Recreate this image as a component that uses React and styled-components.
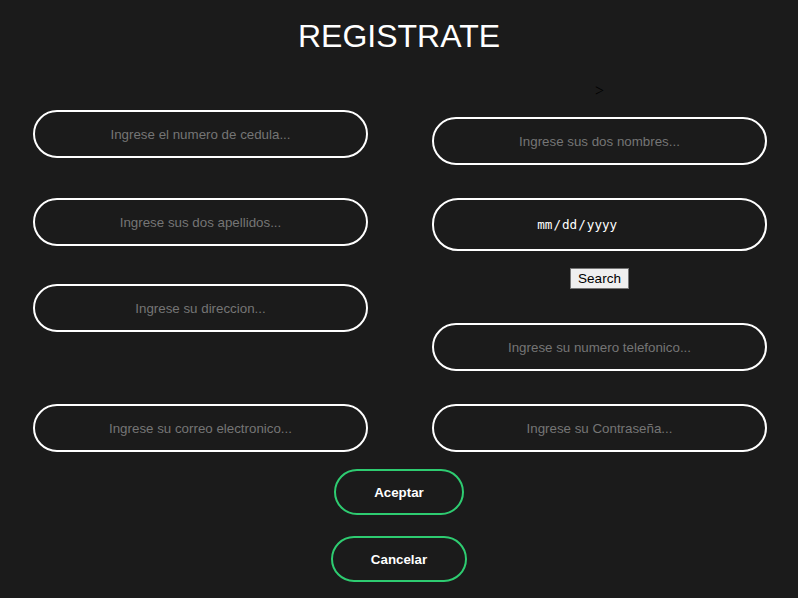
import React from "react";
import styled, { createGlobalStyle } from "styled-components";

const Global = createGlobalStyle`
  html, body { margin: 0; padding: 0; background: #1b1b1b; }
  body { font-family: "Liberation Sans", Arial, sans-serif; }
  * { box-sizing: border-box; }
`;

const Page = styled.div`
  width: 798px;
  min-height: 598px;
  background: #1b1b1b;
  display: flex;
  flex-direction: column;
`;

const Title = styled.h1`
  margin: 18px 0 0;
  font-family: "Liberation Sans", Arial, sans-serif;
  font-weight: 400;
  font-size: 32px;
  line-height: 37px;
  color: #ffffff;
  text-align: center;
`;

const Columns = styled.div`
  margin-top: 25px;
  display: grid;
  grid-template-columns: 401px 397px;
`;

const Column = styled.div`
  display: flex;
  flex-direction: column;
  align-items: center;
`;

const Stray = styled.div`
  height: 18px;
  font-family: "Liberation Serif", "Times New Roman", serif;
  font-size: 16px;
  line-height: 22px;
  color: #000;
  text-align: center;
`;

const Field = styled.input`
  margin-top: ${(p) => p.$mt}px;
  width: 335px;
  height: ${(p) => p.$h || 48}px;
  padding: 0 16px;
  border: 2px solid #ffffff;
  border-radius: 26px;
  background: transparent;
  color: #ffffff;
  font-family: "Liberation Sans", Arial, sans-serif;
  font-size: 13.33px;
  text-align: center;
  outline: none;

  &::placeholder { color: #757575; }
`;

const DateField = styled(Field)`
  padding: 0 31px 0 3px;
  font-family: "DejaVu Sans Mono", "Liberation Mono", monospace;
  font-size: 12.6px;
  color: #ffffff;
  &::-webkit-calendar-picker-indicator { opacity: 0; }
`;

const SearchButton = styled.button`
  margin-top: ${(p) => p.$mt}px;
  height: 21px;
  padding: 1px 7px;
  border: 1px solid #767676;
  border-radius: 0;
  background: #efefef;
  color: #000;
  font-family: "Liberation Sans", Arial, sans-serif;
  font-size: 13.5px;
  line-height: 17px;
`;

const Actions = styled.div`
  display: flex;
  flex-direction: column;
  align-items: center;
`;

const ActionButton = styled.button`
  margin-top: ${(p) => p.$mt}px;
  height: 46px;
  padding: 0 38px;
  border: 2px solid #2ecc71;
  border-radius: 23px;
  background: transparent;
  color: #ffffff;
  font-family: "Liberation Sans", Arial, sans-serif;
  font-weight: 700;
  font-size: 13.33px;
`;

export default function App() {
  return (
    <Page>
      <Global />
      <Title>REGISTRATE</Title>
      <Columns>
        <Column>
          <Field $mt={30} placeholder="Ingrese el numero de cedula..." />
          <Field $mt={40} placeholder="Ingrese sus dos apellidos..." />
          <Field $mt={38} placeholder="Ingrese su direccion..." />
          <Field $mt={72} placeholder="Ingrese su correo electronico..." />
        </Column>
        <Column>
          <Stray>&gt;</Stray>
          <Field $mt={19} placeholder="Ingrese sus dos nombres..." />
          <DateField as="input" type="date" $mt={33} $h={53} />
          <SearchButton $mt={17}>Search</SearchButton>
          <Field $mt={34} placeholder="Ingrese su numero telefonico..." />
          <Field $mt={33} type="password" placeholder="Ingrese su Contraseña..." />
        </Column>
      </Columns>
      <Actions>
        <ActionButton $mt={17}>Aceptar</ActionButton>
        <ActionButton $mt={21}>Cancelar</ActionButton>
      </Actions>
    </Page>
  );
}
